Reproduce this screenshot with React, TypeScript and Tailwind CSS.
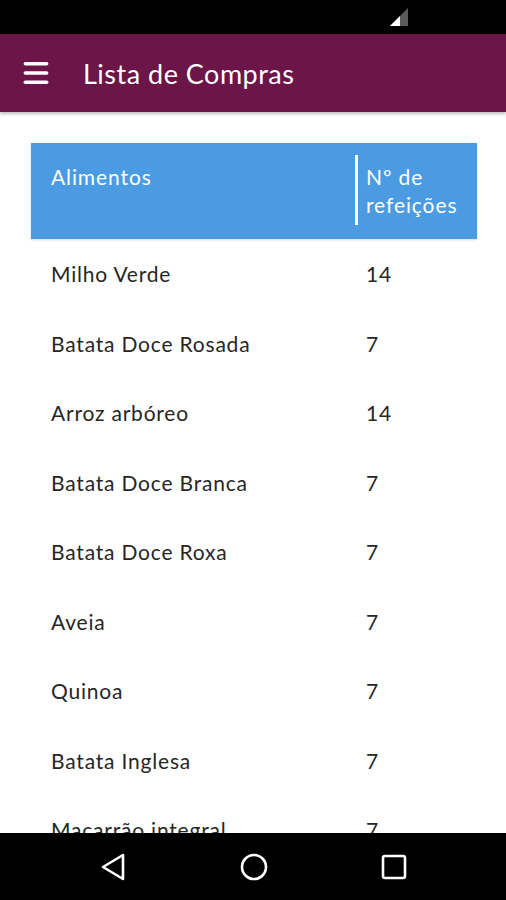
import { Menu } from "lucide-react";

const rows: [string, number][] = [
  ["Milho Verde", 14],
  ["Batata Doce Rosada", 7],
  ["Arroz arbóreo", 14],
  ["Batata Doce Branca", 7],
  ["Batata Doce Roxa", 7],
  ["Aveia", 7],
  ["Quinoa", 7],
  ["Batata Inglesa", 7],
  ["Macarrão integral", 7],
  ["Cenoura", 7],
];

export default function App() {
  return (
    <div
      className="h-[900px] w-[506px] flex flex-col overflow-hidden bg-white"
      style={{ fontFamily: "Lato, 'Open Sans', sans-serif" }}
    >
      {/* Status bar */}
      <div className="h-[34px] bg-black flex items-center justify-end pr-[96px] shrink-0">
        <svg width="22" height="22" viewBox="0 0 22 22">
          <polygon points="20,2 20,20 2,20" fill="#5a5a5a" />
          <polygon points="12,10 12,20 2,20" fill="#ffffff" />
        </svg>
      </div>

      {/* App bar */}
      <div className="h-[78px] bg-[#6b1549] flex items-center shrink-0 shadow-[0_2px_3px_rgba(0,0,0,0.25)] relative z-10">
        <Menu className="ml-[20px] text-white" size={32} strokeWidth={2.6} />
        <span className="ml-[31px] text-white text-[27px] tracking-[0.5px] leading-none">Lista de Compras</span>
      </div>

      {/* Content */}
      <div className="flex-1 overflow-hidden pt-[31px]">
        <div className="ml-[31px] w-[446px]">
          <div className="h-[96px] bg-[#4a9be2] flex text-white text-[21px] tracking-[0.9px] leading-[28px] shadow-[0_1px_2px_rgba(0,0,0,0.15)]">
            <div className="w-[324px] pl-[20px] pt-[20px]">Alimentos</div>
            <div className="w-[3px] bg-white mt-[12px] h-[70px]" />
            <div className="pl-[8px] pt-[20px]">
              Nº de
              <br />
              refeições
            </div>
          </div>
          {rows.map(([name, n]) => (
            <div
              key={name}
              className="h-[69.5px] flex items-center text-[21px] tracking-[0.8px] text-[#262626]"
            >
              <div className="w-[335px] pl-[20px]">{name}</div>
              <div>{n}</div>
            </div>
          ))}
        </div>
      </div>

      {/* Nav bar */}
      <div className="h-[67px] bg-black shrink-0 relative">
        <svg className="absolute left-[100px] top-[20px]" width="26" height="28" viewBox="0 0 26 28">
          <polygon points="23,2 23,26 3,14" fill="none" stroke="white" strokeWidth="2.6" strokeLinejoin="round" />
        </svg>
        <svg className="absolute left-[239px] top-[19px]" width="30" height="30" viewBox="0 0 30 30">
          <circle cx="15" cy="15" r="12" fill="none" stroke="white" strokeWidth="2.6" />
        </svg>
        <svg className="absolute left-[381px] top-[21px]" width="26" height="26" viewBox="0 0 26 26">
          <rect x="2" y="2" width="22" height="22" rx="2" fill="none" stroke="white" strokeWidth="2.6" />
        </svg>
      </div>
    </div>
  );
}
